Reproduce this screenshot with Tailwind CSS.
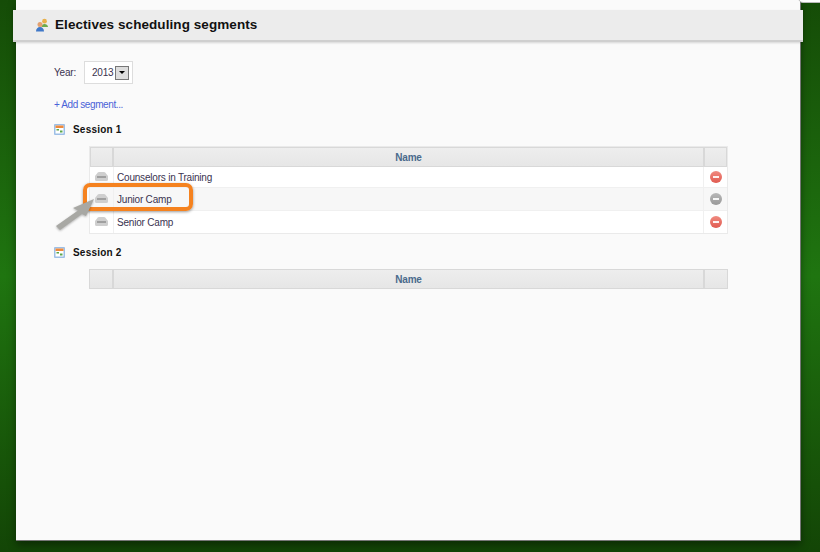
<!DOCTYPE html>
<html lang="en">
<head>
  <meta charset="UTF-8" />
  <title>Electives scheduling segments</title>
  <script src="https://cdn.jsdelivr.net/npm/@tailwindcss/browser@4"></script>
</head>
<body class="relative h-[552px] w-[820px] overflow-hidden bg-gradient-to-b from-[#154c07] via-[#1f7510] to-[#134506] font-['Liberation_Sans',sans-serif] text-[10px] tracking-[-0.2px] text-[#3a3350]">
  <!-- Panel -->
  <div class="ml-[16px] h-[541px] w-[785px] border-r border-b border-[#777] bg-[#fafafa] shadow-[0_4px_8px_rgba(0,0,0,0.4)]">
    <!-- Header -->
    <div class="relative top-[10px] -ml-[3px] flex h-[32px] w-[790px] items-center border-b-2 border-[#cfcfcf] bg-[#ececec] pl-[22px] shadow-[0_1px_2px_rgba(0,0,0,0.15)]">
      <svg class="h-[14px] w-[14px]" viewBox="0 0 14 14">
        <circle cx="9.5" cy="3.2" r="2.4" fill="#e8b04a" />
        <path d="M6.5 9c0-2 1.5-3 3-3s3.500 1 3.500 3z" fill="#6cab4a" />
        <circle cx="5" cy="6.500" r="2.500" fill="#e2a070" />
        <path d="M1 13.500c0-3 1.800-4.500 4-4.500s4 1.500 4 4.500z" fill="#3f78c8" />
      </svg>
      <h1 class="ml-[6px] text-[13.5px] font-bold tracking-[0.07px] text-[#111]">Electives scheduling segments</h1>
    </div>

    <!-- Content -->
    <div class="pt-[29px] pl-[38px]">
      <div class="flex items-center">
        <span>Year:</span>
        <div class="ml-[8px] flex h-[23px] w-[49px] items-center border border-[#ddd] bg-white pl-[7px]">
          2013
          <span class="ml-[2px] flex h-[14px] w-[14px] items-center justify-center border border-[#777] bg-[#ddd]">
            <span class="h-0 w-0 border-x-[3px] border-t-[3px] border-x-transparent border-t-black"></span>
          </span>
        </div>
      </div>

      <a class="mt-[13px] block tracking-[-0.4px] text-[#4a63d8]">+ Add segment...</a>

      <!-- Session 1 -->
      <div class="mt-[10px] flex h-[14px] items-center">
        <svg class="h-[11px] w-[11px]" viewBox="0 0 11 11">
          <rect width="11" height="11" rx="1" fill="#9dbfe6" />
          <rect x="1.500" y="1.500" width="8" height="8" fill="#fff" />
          <rect x="1.500" y="1.500" width="8" height="2.500" fill="#ef8a3c" />
          <rect x="2.500" y="5" width="2.500" height="1.500" fill="#5aa64a" />
          <rect x="6" y="6.500" width="2.500" height="2" fill="#5aa64a" />
        </svg>
        <h2 class="ml-[8px] text-[10px] font-bold tracking-[0.2px] text-[#111]">Session 1</h2>
      </div>

      <div class="mt-[10px] ml-[35px] w-[639px] border border-[#eaeaea] bg-white">
        <div class="flex h-[20px] bg-gradient-to-b from-[#eeeeee] to-[#e6e6e6] font-bold text-[#4a6a8c] outline outline-1 -outline-offset-1 outline-[#d8d8d8]">
          <div class="w-[24px] border-r-2 border-[#d8d8d8]"></div>
          <div class="flex flex-1 items-center justify-center">Name</div>
          <div class="w-[24px] border-l-2 border-[#d8d8d8]"></div>
        </div>
        <div class="flex h-[21px] items-center border-b border-[#f0f0f0] bg-white">
          <div class="flex h-full w-[24px] items-center justify-center border-r border-[#f0f0f0]">
            <svg class="-mt-[2px] h-[9px] w-[13px]" viewBox="0 0 13 9"><path d="M2 1.500Q2.500 0 4 0H9Q10.500 0 11 1.500L13 4V7.500Q13 9 11.500 9H1.500Q0 9 0 7.500V4Z" fill="#cfcfcf" /><rect x="2" y="4" width="9" height="2" fill="#a0a0a0" /></svg>
          </div>
          <div class="flex-1 pl-[3px]">Counselors in Training</div>
          <div class="flex h-full w-[24px] items-center justify-center border-l border-[#f0f0f0]">
            <span class="-mt-[1px] flex h-[12px] w-[12px] items-center justify-center rounded-full bg-gradient-to-b from-[#f08a80] to-[#e05a50]"><span class="h-[2px] w-[6px] bg-white/90"></span></span>
          </div>
        </div>
        <div class="flex h-[23px] items-center border-b border-[#f0f0f0] bg-[#f7f7f7]">
          <div class="flex h-full w-[24px] items-center justify-center border-r border-[#f0f0f0]">
            <svg class="-mt-[2px] h-[9px] w-[13px]" viewBox="0 0 13 9"><path d="M2 1.500Q2.500 0 4 0H9Q10.500 0 11 1.500L13 4V7.500Q13 9 11.500 9H1.500Q0 9 0 7.500V4Z" fill="#cfcfcf" /><rect x="2" y="4" width="9" height="2" fill="#a0a0a0" /></svg>
          </div>
          <div class="flex-1 pl-[3px]">Junior Camp</div>
          <div class="flex h-full w-[24px] items-center justify-center border-l border-[#f0f0f0]">
            <span class="-mt-[1px] flex h-[12px] w-[12px] items-center justify-center rounded-full bg-gradient-to-b from-[#b8b8b8] to-[#999]"><span class="h-[2px] w-[6px] bg-white/90"></span></span>
          </div>
        </div>
        <div class="flex h-[22px] items-center bg-white">
          <div class="flex h-full w-[24px] items-center justify-center border-r border-[#f0f0f0]">
            <svg class="-mt-[2px] h-[9px] w-[13px]" viewBox="0 0 13 9"><path d="M2 1.500Q2.500 0 4 0H9Q10.500 0 11 1.500L13 4V7.500Q13 9 11.500 9H1.500Q0 9 0 7.500V4Z" fill="#cfcfcf" /><rect x="2" y="4" width="9" height="2" fill="#a0a0a0" /></svg>
          </div>
          <div class="flex-1 pl-[3px]">Senior Camp</div>
          <div class="flex h-full w-[24px] items-center justify-center border-l border-[#f0f0f0]">
            <span class="-mt-[1px] flex h-[12px] w-[12px] items-center justify-center rounded-full bg-gradient-to-b from-[#f08a80] to-[#e05a50]"><span class="h-[2px] w-[6px] bg-white/90"></span></span>
          </div>
        </div>
      </div>

      <!-- Session 2 -->
      <div class="mt-[11px] flex h-[14px] items-center">
        <svg class="h-[11px] w-[11px]" viewBox="0 0 11 11">
          <rect width="11" height="11" rx="1" fill="#9dbfe6" />
          <rect x="1.500" y="1.500" width="8" height="8" fill="#fff" />
          <rect x="1.500" y="1.500" width="8" height="2.500" fill="#ef8a3c" />
          <rect x="2.500" y="5" width="2.500" height="1.500" fill="#5aa64a" />
          <rect x="6" y="6.500" width="2.500" height="2" fill="#5aa64a" />
        </svg>
        <h2 class="ml-[8px] text-[10px] font-bold tracking-[0.2px] text-[#111]">Session 2</h2>
      </div>

      <div class="mt-[10px] ml-[35px] w-[639px]">
        <div class="flex h-[20px] bg-gradient-to-b from-[#eeeeee] to-[#e6e6e6] font-bold text-[#4a6a8c] outline outline-1 -outline-offset-1 outline-[#d8d8d8]">
          <div class="w-[25px] border-r-2 border-[#d8d8d8]"></div>
          <div class="flex flex-1 items-center justify-center">Name</div>
          <div class="w-[25px] border-l-2 border-[#d8d8d8]"></div>
        </div>
      </div>
    </div>
  </div>

  <!-- Window corner peeking in at the top right -->
  <div class="absolute top-[-8px] left-[798px] h-[11px] w-[30px] rounded-bl-[5px] border border-[#bbb] bg-white"></div>

  <!-- Annotation over the row -->
  <div class="absolute top-[183px] left-[83px] h-[28px] w-[110px] rounded-[7px] border-[4px] border-[#f5821f] shadow-[0_1px_3px_rgba(0,0,0,0.4)]"></div>
  <svg class="absolute top-[190px] left-[50px] h-[50px] w-[60px] drop-shadow-[0_1px_1px_rgba(0,0,0,0.3)]" viewBox="0 0 60 50">
    <path d="M44 9 L23 18 L28 20.500 L6 36 L10 40 L32 24 L36 26 Z" fill="#a8a8a4" />
  </svg>
</body>
</html>
